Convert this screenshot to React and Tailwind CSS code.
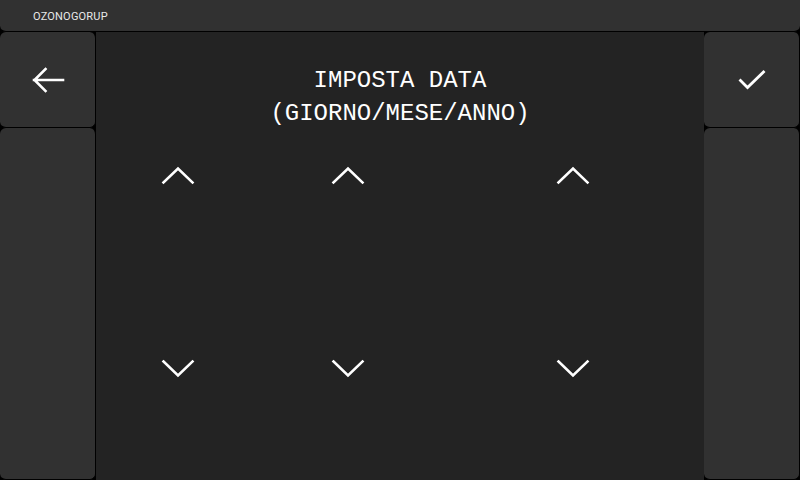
const columns = ['giorno', 'mese', 'anno'];

function Chevron({ up }) {
  return (
    <svg width="34" height="20" viewBox="0 0 34 20" fill="none">
      <path
        d={up ? 'M2.5 17.5 L17 3.5 L31.5 17.5' : 'M2.5 2.5 L17 16.5 L31.5 2.5'}
        stroke="white"
        strokeWidth="2.6"
        strokeLinecap="square"
      />
    </svg>
  );
}

function BackArrow() {
  return (
    <svg width="34" height="28" viewBox="0 0 34 28" fill="none">
      <path d="M3 14 H32 M14.5 3 L3.5 14 L14.5 25" stroke="white" strokeWidth="2.6" strokeLinecap="square" />
    </svg>
  );
}

function CheckMark() {
  return (
    <svg width="30" height="22" viewBox="0 0 30 22" fill="none">
      <path d="M3.5 11.5 L10.5 18.5 L26.5 3" stroke="white" strokeWidth="2.8" strokeLinecap="square" />
    </svg>
  );
}

export default function App() {
  return (
    <div className="w-[800px] h-[480px] bg-black flex flex-col overflow-hidden">
      {/* Top bar */}
      <div className="h-[32px] shrink-0 bg-[#313131] border-b border-black rounded-b-md flex items-center px-[33px] pt-[3px]">
        <span className="text-[11px] text-[#e8e8e8] tracking-[0.2px]" style={{ fontFamily: 'Roboto, sans-serif' }}>
          OZONOGORUP
        </span>
      </div>

      <div className="flex-1 flex min-h-0">
        {/* Left column */}
        <div className="w-[96px] shrink-0 flex flex-col">
          <button className="h-[96px] bg-[#313131] border-r border-b border-black rounded-md flex items-center justify-center">
            <BackArrow />
          </button>
          <div className="flex-1 bg-[#313131] border-r border-b border-black rounded-md" />
        </div>

        {/* Center */}
        <div className="flex-1 bg-[#232323] flex flex-col items-center">
          <h1
            className="mt-[32px] text-center text-[24px] leading-[33px] text-white"
            style={{ fontFamily: '"Liberation Mono", monospace' }}
          >
            IMPOSTA DATA
            <br />
            (GIORNO/MESE/ANNO)
          </h1>
          <div className="relative w-full flex-1">
            {columns.map((c, i) => (
              <div key={c} className="absolute top-0 flex flex-col items-center gap-[174px]" style={{ left: [65, 235, 460][i] }}>
                <div className="mt-[35px]">
                  <Chevron up />
                </div>
                <Chevron />
              </div>
            ))}
          </div>
        </div>

        {/* Right column */}
        <div className="w-[96px] shrink-0 flex flex-col">
          <button className="h-[96px] bg-[#313131] border-r border-b border-black rounded-md flex items-center justify-center">
            <CheckMark />
          </button>
          <div className="flex-1 bg-[#313131] border-r border-b border-black rounded-md" />
        </div>
      </div>
    </div>
  );
}
